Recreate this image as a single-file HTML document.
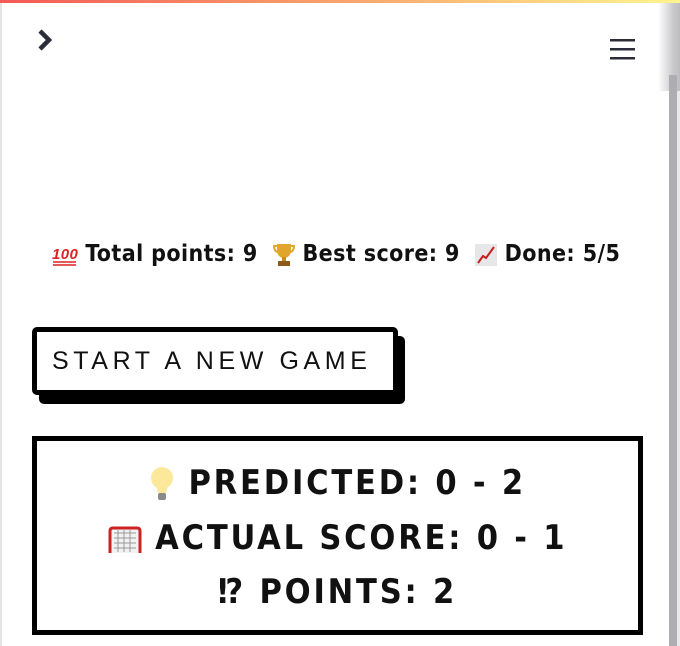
<!DOCTYPE html>
<html><head><meta charset="utf-8"><style>
*{margin:0;padding:0;box-sizing:border-box}
html,body{width:680px;height:646px;overflow:hidden;background:#fff;font-family:"Liberation Sans",sans-serif}
.bar{position:absolute;left:0;top:0;width:680px;height:3px;background:linear-gradient(90deg,#f35a57,#f8a36c 50%,#fdf58f)}
.lb{position:absolute;left:0;top:3px;width:2px;height:643px;background:#e4e4e4}
.sh{position:absolute;left:658px;top:3px;width:22px;height:88px;background:linear-gradient(90deg,rgba(255,255,255,0),#c9c9cc 70%,#bdbdc0)}
.sb{position:absolute;left:669px;top:75px;width:8px;height:571px;background:#aeadb2}
.sb2{position:absolute;left:677px;top:91px;width:3px;height:555px;background:#e9e9ea}
.stats{position:absolute;left:0;width:672px;top:241px;text-align:center;font-weight:bold;font-size:23px;color:#111;font-family:"DejaVu Sans Condensed","Liberation Sans",sans-serif;letter-spacing:0.4px;white-space:nowrap}
.btn{position:absolute;left:32px;top:327px;width:366px;height:68px;border:5px solid #000;border-radius:5px;background:#fff;box-shadow:7px 9px 0 #000;font-size:25px;letter-spacing:4.6px;display:flex;align-items:center;padding-left:15px;color:#111;white-space:nowrap}
.box{position:absolute;left:32px;top:436px;width:611px;height:199px;border:5px solid #000;text-align:center;font-weight:bold;font-size:34px;letter-spacing:2.8px;color:#111;font-family:"DejaVu Sans Condensed","Liberation Sans",sans-serif}
.l{position:absolute;left:0;width:100%;line-height:40px;white-space:nowrap}
svg{vertical-align:middle}
</style></head><body>
<div class="bar"></div><div class="lb"></div>
<svg style="position:absolute;left:36px;top:27px" width="20" height="26" viewBox="0 0 20 26"><path d="M4 4 L13 13 L4 22" fill="none" stroke="#2b2d39" stroke-width="4.5"/></svg>
<svg style="position:absolute;left:610px;top:38px" width="26" height="24"><rect x="0" y="1" width="25" height="2.5" fill="#2b2d39"/><rect x="0" y="10" width="25" height="2.5" fill="#2b2d39"/><rect x="0" y="19" width="25" height="2.5" fill="#2b2d39"/></svg>
<div class="sh"></div><div class="sb"></div><div class="sb2"></div>
<div class="stats"><svg width="26" height="22" viewBox="0 0 26 22"><text x="0" y="15" font-size="15" font-weight="bold" font-style="italic" fill="#d22" font-family="Liberation Sans">100</text><path d="M1 18h23M1 21h23" stroke="#d22" stroke-width="1.5"/></svg> Total points: 9 &nbsp;<svg width="22" height="26" viewBox="0 0 22 26"><path d="M4 2h14v6c0 5-3 8-7 8s-7-3-7-8z" fill="#e0a52a"/><path d="M4 4H1c0 4 2 6 4 6M18 4h3c0 4-2 6-4 6" fill="none" stroke="#e0a52a" stroke-width="2"/><rect x="9" y="15" width="4" height="4" fill="#c88a1a"/><rect x="5" y="19" width="12" height="5" fill="#8a5a1a"/></svg> Best score: 9 &nbsp;<svg width="22" height="22" viewBox="0 0 22 22"><rect x="0" y="0" width="22" height="22" fill="#e7e7ea"/><path d="M3 19L8 12L11 14L19 3" fill="none" stroke="#c81e1e" stroke-width="2"/></svg> Done: 5/5</div>
<div class="btn">START A NEW GAME</div>
<div class="box">
<div class="l" style="top:22px"><svg width="26" height="40" viewBox="0 0 26 40"><circle cx="13" cy="13" r="11" fill="#fbe89a"/><path d="M7 20h12l-2 8H9z" fill="#fbe89a"/><rect x="9" y="28" width="8" height="7" rx="2" fill="#8a8a8a"/></svg> PREDICTED: 0 - 2</div>
<div class="l" style="top:77px"><svg width="34" height="30" viewBox="0 0 34 30"><path d="M2 28V6q0-3 3-3h24q3 0 3 3v22" fill="#f2f2f2" stroke="#c22" stroke-width="3"/><path d="M6 8h22M6 13h22M6 18h22M6 23h22M10 5v22M16 5v22M22 5v22" stroke="#999" stroke-width="1"/></svg> ACTUAL SCORE: 0 - 1</div>
<div class="l" style="top:131px">⁉ POINTS: 2</div>
</div>
</body></html>
